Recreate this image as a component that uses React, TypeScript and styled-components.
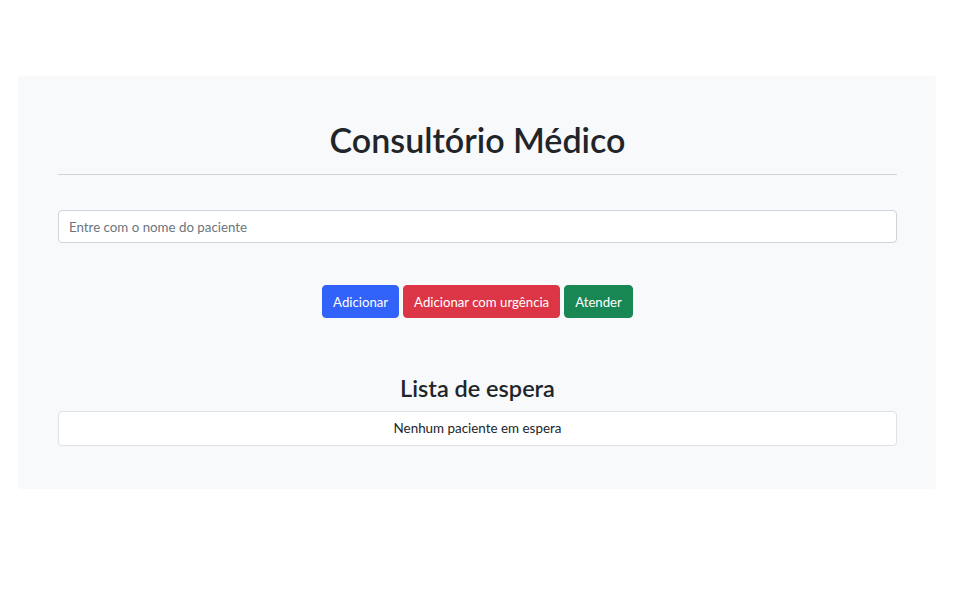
import React, { useState } from "react";
import styled, { createGlobalStyle } from "styled-components";

const GlobalStyle = createGlobalStyle`
  body {
    margin: 0;
    background: #ffffff;
    font-family: Lato, "Noto Sans", sans-serif;
    color: #212529;
  }
`;

type Variant = "primary" | "danger" | "success";

const colors: Record<Variant, string> = {
  primary: "#3162fa",
  danger: "#dc3545",
  success: "#198754",
};

const App = () => {
  const [name, setName] = useState("");
  const [queue, setQueue] = useState<string[]>([]);

  const add = () => {
    if (!name.trim()) return;
    setQueue([...queue, name.trim()]);
    setName("");
  };

  const addUrgent = () => {
    if (!name.trim()) return;
    setQueue([name.trim(), ...queue]);
    setName("");
  };

  const attend = () => setQueue(queue.slice(1));

  return (
    <Page>
      <GlobalStyle />
      <Panel>
        <Title>Consultório Médico</Title>
        <Divider />
        <Input
          placeholder="Entre com o nome do paciente"
          value={name}
          onChange={(e) => setName(e.target.value)}
        />
        <Actions>
          <Button variant="primary" onClick={add}>
            Adicionar
          </Button>
          <Button variant="danger" onClick={addUrgent}>
            Adicionar com urgência
          </Button>
          <Button variant="success" onClick={attend}>
            Atender
          </Button>
        </Actions>
        <Subtitle>Lista de espera</Subtitle>
        <List>
          {queue.length === 0 ? (
            <Item>Nenhum paciente em espera</Item>
          ) : (
            queue.map((p, i) => <Item key={i}>{p}</Item>)
          )}
        </List>
      </Panel>
    </Page>
  );
};

export default App;

const Page = styled.div`
  padding: 76px 24px 0 18px;
`;

const Panel = styled.div`
  background-color: #f8f9fa;
  border-radius: 4px;
  padding: 44px 39px 43px 40px;
`;

const Title = styled.h1`
  margin: 0;
  text-align: center;
  font-size: 34px;
  font-weight: 600;
  line-height: 40px;
`;

const Divider = styled.hr`
  margin: 14px 0 35px;
  border: 0;
  border-top: 1px solid #d3d4d6;
`;

const Input = styled.input`
  display: block;
  box-sizing: border-box;
  width: 100%;
  height: 33px;
  padding: 0 10px;
  border: 1px solid #ced4da;
  border-radius: 4px;
  background: #ffffff;
  font-family: inherit;
  font-size: 13.3px;
  color: #212529;
  outline: none;

  &::placeholder {
    color: #6c757d;
  }
`;

const Actions = styled.div`
  display: flex;
  justify-content: center;
  gap: 4px;
  margin-top: 42px;
`;

const Button = styled.button<{ variant: Variant }>`
  height: 33px;
  padding: 0 10px;
  border: 1px solid ${(p) => colors[p.variant]};
  border-radius: 4px;
  background-color: ${(p) => colors[p.variant]};
  color: #ffffff;
  font-family: inherit;
  font-size: 13.2px;
  cursor: pointer;
`;

const Subtitle = styled.h2`
  margin: 56px 0 9px;
  text-align: center;
  font-size: 23.5px;
  font-weight: 600;
  line-height: 28px;
`;

const List = styled.ul`
  margin: 0;
  padding: 0;
  list-style: none;
  border: 1px solid #dee2e6;
  border-radius: 4px;
  background: #ffffff;
`;

const Item = styled.li`
  padding: 8px 14px;
  text-align: center;
  font-size: 13.4px;
  line-height: 17px;
`;
